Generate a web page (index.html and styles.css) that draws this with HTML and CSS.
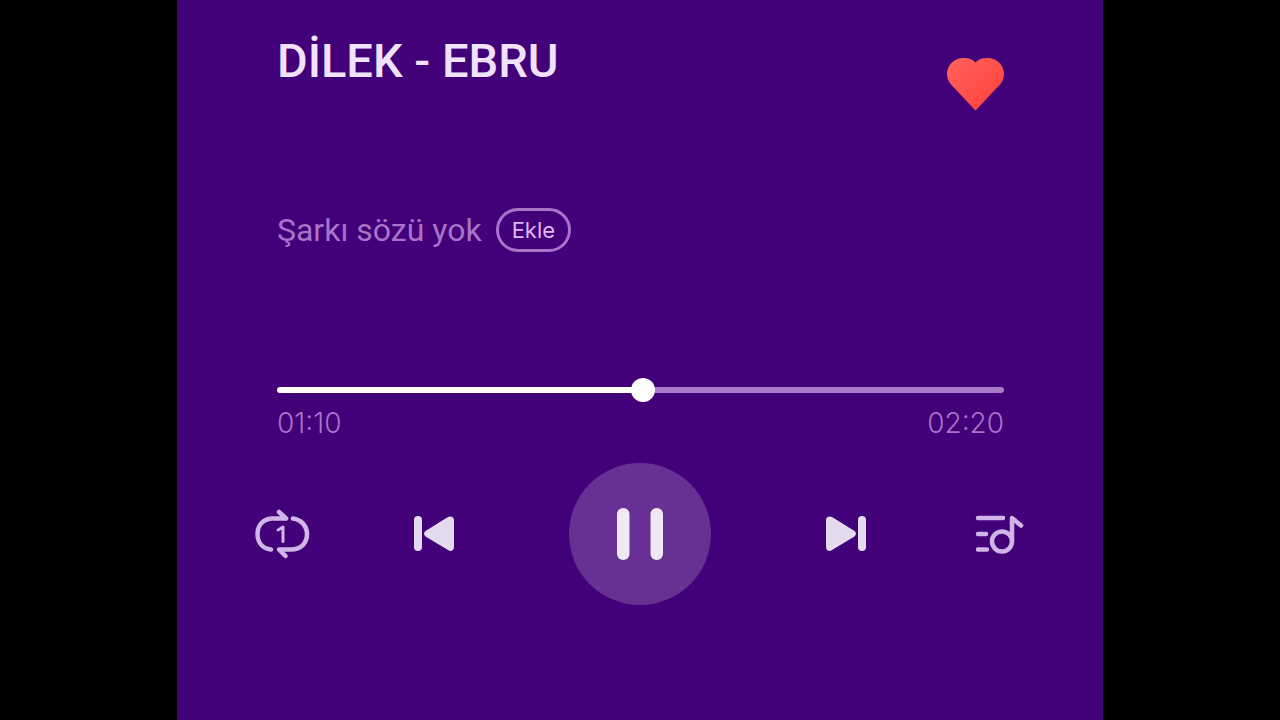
FILE: index.html
```html
<!DOCTYPE html>
<html lang="tr">
<head>
<meta charset="utf-8">
<meta name="viewport" content="width=device-width, initial-scale=1">
<title>DİLEK - EBRU</title>
<link rel="stylesheet" href="styles.css">
</head>
<body>
<main class="player">
  <header class="heading">
    <h1 class="title">DİLEK - EBRU</h1>
    <button class="icon-button like" type="button" aria-label="Beğen" aria-pressed="true">
      <svg width="58" height="54" viewBox="0 0 58 54" aria-hidden="true">
        <defs>
          <linearGradient id="heart-fill" x1="0" y1="0" x2="1" y2="1">
            <stop offset="0" stop-color="#ff625e"/>
            <stop offset="1" stop-color="#ff4038"/>
          </linearGradient>
        </defs>
        <path fill="url(#heart-fill)" d="M29.500 5.500C25.500 1.500 21.500 1 17.500 1C8 1 1 8 1 17C1 22 3 25.500 6 28.500L28.500 52.500Q29.500 54 30.500 52.500L53 28.500C56 25.500 58 22 58 17C58 8 51 1 41.500 1C37.500 1 33.500 1.500 29.500 5.500Z"/>
      </svg>
    </button>
  </header>

  <section class="lyrics">
    <p class="lyrics-text">Şarkı sözü yok</p>
    <button class="add" type="button">Ekle</button>
  </section>

  <section class="progress">
    <input class="seek" type="range" min="0" max="140" value="70.500" step="any" aria-label="Çalma konumu">
    <div class="times"><span>01:10</span><span>02:20</span></div>
  </section>

  <nav class="controls" aria-label="Oynatma">
    <button class="icon-button" type="button" aria-label="Bir kez tekrarla">
      <svg width="56" height="50" viewBox="0 0 56 50" fill="none" stroke="#d2b5e8" stroke-width="4.500" stroke-linecap="round" stroke-linejoin="round" aria-hidden="true">
        <path d="M32 9.500H19C9 9.500 3.500 16.500 3.500 25C3.500 33 8 39.500 17 40.500M25 3L32 9.500"/>
        <path d="M39 9.500C47 10.500 53 17 53 25C53 34 47 40.500 37 40.500H25L31.500 47"/>
        <path stroke-width="3" d="M24 21L29 18V32.500"/>
      </svg>
    </button>
    <div class="transport">
      <button class="icon-button" type="button" aria-label="Önceki">
        <svg width="42" height="38" viewBox="0 0 42 38" fill="#e4dbee" aria-hidden="true">
          <rect x="1" y="1" width="8" height="35" rx="4"/>
          <path d="M12.500 16L35 2C38 .5 41 2 41 5V32C41 35.500 38 37 35 35L12.500 21.500Q9.500 18.500 12.500 16Z"/>
        </svg>
      </button>
      <button class="icon-button pause" type="button" aria-label="Duraklat">
        <svg width="48" height="54" viewBox="0 0 48 54" fill="#f0e8f5" aria-hidden="true">
          <rect x="1" y="1" width="12.500" height="52" rx="6.200"/>
          <rect x="34.500" y="1" width="12.500" height="52" rx="6.200"/>
        </svg>
      </button>
      <button class="icon-button" type="button" aria-label="Sonraki">
        <svg width="42" height="38" viewBox="0 0 42 38" fill="#e4dbee" aria-hidden="true">
          <rect x="33" y="1" width="8" height="35" rx="4"/>
          <path d="M29.500 16L7 2C4 .5 1 2 1 5V32C1 35.500 4 37 7 35L29.500 21.500Q32.500 18.500 29.500 16Z"/>
        </svg>
      </button>
    </div>
    <button class="icon-button" type="button" aria-label="Çalma listesi">
      <svg width="55" height="40" viewBox="-4 0 55 40" fill="none" stroke="#d2b5e8" stroke-width="4.500" stroke-linecap="round" stroke-linejoin="round" aria-hidden="true">
        <path d="M4 4H29M4 20H12M4 35.500H13M38 27V4L47 11.500"/>
        <circle cx="28" cy="27.500" r="10"/>
      </svg>
    </button>
  </nav>
</main>
</body>
</html>
```
FILE: styles.css
```css
* {
  box-sizing: border-box;
}

body {
  margin: 0;
  background: #000;
  font-family: Roboto, Inter, sans-serif;
}

.player {
  width: 72.35%;
  min-height: 100vh;
  margin: 0 auto;
  padding: 33px 99px 32px 100px;
  background: #420079;
}

.heading {
  display: flex;
  align-items: flex-start;
  justify-content: space-between;
}

.title {
  margin: 0;
  color: #f0e2fa;
  font-size: 47px;
  font-weight: 500;
  line-height: 56px;
}

.icon-button {
  display: flex;
  flex: none;
  align-items: center;
  justify-content: center;
  padding: 0;
  border: 0;
  background: none;
  cursor: pointer;
}

.like {
  margin-top: 24px;
}

.lyrics {
  display: flex;
  align-items: center;
  gap: 14px;
  margin-top: 97px;
}

.lyrics-text {
  margin: 0;
  color: #a873c9;
  font-size: 32px;
  line-height: 44px;
}

.add {
  height: 44px;
  padding: 0 13px;
  border: 3px solid #a873c9;
  border-radius: 22px;
  background: none;
  color: #dcb8f5;
  font-family: Inter, Roboto, sans-serif;
  font-size: 22px;
  cursor: pointer;
}

.progress {
  margin-top: 126px;
}

.seek {
  display: block;
  width: 100%;
  height: 24px;
  margin: 0;
  background: none;
  appearance: none;
  cursor: pointer;
}

.seek::-webkit-slider-runnable-track {
  height: 6px;
  border-radius: 3px;
  background: linear-gradient(to right, #fff 50%, #a87cc8 50%);
}

.seek::-webkit-slider-thumb {
  width: 24px;
  height: 24px;
  margin-top: -9px;
  border-radius: 50%;
  background: #fff;
  appearance: none;
}

.times {
  display: flex;
  justify-content: space-between;
  margin-top: 4px;
  color: #a873c9;
  font-family: Inter, Roboto, sans-serif;
  font-size: 28px;
  font-weight: 300;
  line-height: 34px;
}

.controls {
  display: flex;
  align-items: center;
  justify-content: space-between;
  margin: 23px -21px 0 -23px;
}

.transport {
  display: flex;
  align-items: center;
  justify-content: space-between;
  width: 59%;
}

.pause {
  width: 142px;
  height: 142px;
  border-radius: 50%;
  background: #673193;
}
```
